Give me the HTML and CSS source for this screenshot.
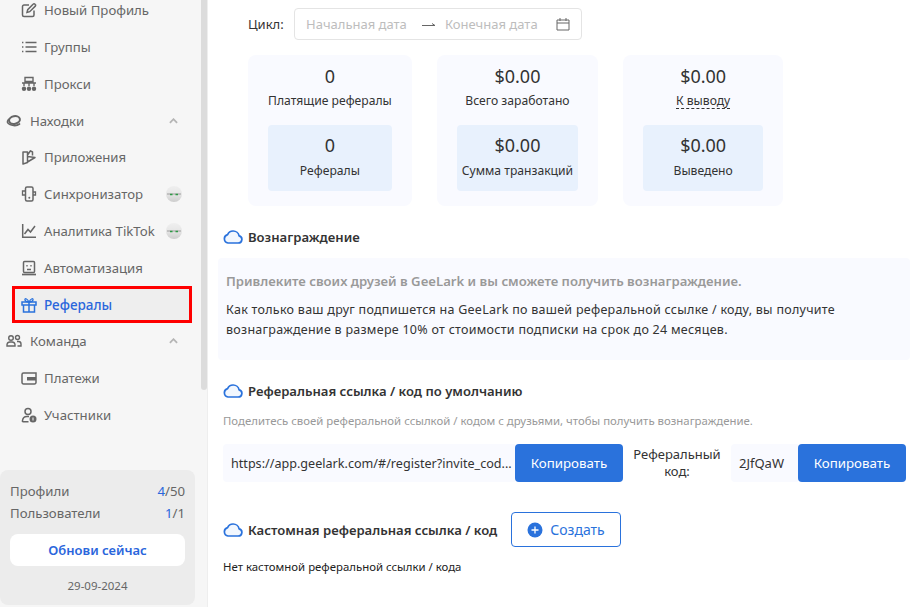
FILE: index.html
```html
<!DOCTYPE html>
<html lang="ru">
<head>
<meta charset="utf-8">
<title>Рефералы</title>
<link rel="stylesheet" href="styles.css">
</head>
<body>
<svg class="defs" aria-hidden="true"><defs>
<linearGradient id="faceFill" x1="0" y1="0" x2="0" y2="1"><stop offset="0" stop-color="#efefef"/><stop offset=".5" stop-color="#e6e6e6"/><stop offset="1" stop-color="#cdcdcd"/></linearGradient>
<symbol id="cloud" viewBox="0 0 20 14"><path d="M5 13h10.200a3.600 3.600 0 0 0 .9-7.100A6 6 0 0 0 10 1a6 6 0 0 0-5.400 3.600A4.300 4.300 0 0 0 5 13z" fill="#f2f7fe" stroke="#2a72dc" stroke-width="1.700" stroke-linejoin="round"/></symbol>
<symbol id="face" viewBox="0 0 16 16"><circle cx="8" cy="8" r="8" fill="url(#faceFill)"/><path d="M1 8h14" stroke="#8a8a8a" stroke-width=".8"/><path d="M4 8.500h2.500M9.500 8.500h2.500" stroke="#2c9a44" stroke-width="1.500"/></symbol>
</defs></svg>
<div class="app">
  <aside class="sidebar">
    <nav class="nav">
      <a class="item sub"><svg class="ico" viewBox="0 0 16 16"><path d="M13 8.500V13a1.500 1.500 0 0 1-1.500 1.500H3A1.500 1.500 0 0 1 1.500 13V4.500A1.500 1.500 0 0 1 3 3h5" fill="none" stroke="#666" stroke-width="1.500"/><path d="M6 10.500l.7-2.800 5.600-5.600a1 1 0 0 1 1.500 0l.5.500a1 1 0 0 1 0 1.500L8.700 9.700z" fill="none" stroke="#666" stroke-width="1.500"/></svg><span>Новый Профиль</span></a>
      <a class="item sub"><svg class="ico" viewBox="0 0 16 16"><path d="M4.500 3.500h11M4.500 8h11M4.500 12.500h11" stroke="#666" stroke-width="1.300"/><path d="M1 3.500h2M1 8h2M1 12.500h2" stroke="#666" stroke-width="1.300" stroke-dasharray="1.200 .6"/></svg><span>Группы</span></a>
      <a class="item sub"><svg class="ico" viewBox="0 0 16 16"><path d="M4 1.500h8v4H4zM1 7h14" fill="none" stroke="#666" stroke-width="1.400"/><path d="M3 7v3M8 5v5M13 7v3" stroke="#666" stroke-width="1.400"/><circle cx="3" cy="12.700" r="2.200" fill="#666"/><circle cx="8" cy="12.700" r="2.200" fill="#666"/><circle cx="13" cy="12.700" r="2.200" fill="#666"/></svg><span>Прокси</span></a>
      <a class="item group"><svg class="ico" viewBox="0 0 16 16"><ellipse cx="8.500" cy="7" rx="5.500" ry="3.800" transform="rotate(-12 8.500 7)" fill="none" stroke="#666" stroke-width="2"/><path d="M2.500 6.500C.5 9 1.500 10.500 4 11.500c3.500 1.500 7.500 1 9.500-.5" fill="none" stroke="#666" stroke-width="1.700" stroke-linecap="round"/></svg><span>Находки</span><svg class="chev" viewBox="0 0 10 6"><path d="M1 5l4-4 4 4" fill="none" stroke="#b5b5b5" stroke-width="2"/></svg></a>
      <a class="item sub"><svg class="ico" viewBox="0 0 16 16"><path d="M2 3h4.500v10.500L2 15zM6.500 6l3-4.200 2 1.200v3.500M6.500 7.500l7.500 1-7.500 4.500" fill="none" stroke="#666" stroke-width="1.500" stroke-linejoin="round"/></svg><span>Приложения</span></a>
      <a class="item sub"><svg class="ico" viewBox="0 0 16 16"><rect x="4.500" y="1" width="7.500" height="14" rx="1.500" fill="none" stroke="#666" stroke-width="1.500"/><path d="M4.500 5H1.500v4h3M12 6h2.500v3H12" fill="none" stroke="#666" stroke-width="1.300"/><circle cx="8.300" cy="11.700" r="1" fill="#666"/></svg><span>Синхронизатор</span><svg class="face"><use href="#face"/></svg></a>
      <a class="item sub"><svg class="ico" viewBox="0 0 16 16"><path d="M1.700 1v13.300H15" fill="none" stroke="#666" stroke-width="1.500"/><path d="M3.500 11l3.500-4.500 2.500 2.500L14 3" fill="none" stroke="#666" stroke-width="1.500"/></svg><span>Аналитика TikTok</span><svg class="face"><use href="#face"/></svg></a>
      <a class="item sub"><svg class="ico" viewBox="0 0 16 16"><rect x="2.500" y="1.500" width="11" height="11" rx="1" fill="none" stroke="#666" stroke-width="1.500"/><path d="M1 14.500h14" stroke="#666" stroke-width="1.700"/><path d="M6 5v1.500M10 5v1.500M6 9.500h4" stroke="#666" stroke-width="1.300"/></svg><span>Автоматизация</span></a>
      <a class="item sub active"><svg class="ico" viewBox="0 0 16 16"><path d="M1 5h14v3H1zM2.500 8v7h11V8M8 5v10" fill="none" stroke="#2a72dc" stroke-width="1.500"/><path d="M8 5C6 1 3.500 1 4 3s2 2 4 2c2 0 3.500 0 4-2s-2-2-4 2z" fill="none" stroke="#2a72dc" stroke-width="1.300"/></svg><span>Рефералы</span></a>
      <a class="item group"><svg class="ico" viewBox="0 0 16 16"><circle cx="5" cy="5" r="2.300" fill="none" stroke="#666" stroke-width="1.400"/><circle cx="11.500" cy="4.500" r="2" fill="none" stroke="#666" stroke-width="1.400"/><path d="M1 13v-1.500A3 3 0 0 1 4 9h2a3 3 0 0 1 3 2.500V13zM11 8.500h1.500a2.500 2.500 0 0 1 2.500 2.500v2h-3.500" fill="none" stroke="#666" stroke-width="1.400"/></svg><span>Команда</span><svg class="chev" viewBox="0 0 10 6"><path d="M1 5l4-4 4 4" fill="none" stroke="#b5b5b5" stroke-width="2"/></svg></a>
      <a class="item sub"><svg class="ico" viewBox="0 0 16 16"><path d="M15 3H2.500A1.500 1.500 0 0 0 1 4.500v8A1.500 1.500 0 0 0 2.500 14h11a1.500 1.500 0 0 0 1.500-1.500V3z" fill="none" stroke="#666" stroke-width="1.500"/><path d="M6 7h9v3.500H6z" fill="#666"/></svg><span>Платежи</span></a>
      <a class="item sub"><svg class="ico" viewBox="0 0 16 16"><circle cx="7" cy="4.500" r="3" fill="none" stroke="#666" stroke-width="1.500"/><path d="M1.500 15v-1.500A4.500 4.500 0 0 1 6 9.500h2M1.500 14.800h6" fill="none" stroke="#666" stroke-width="1.500"/><circle cx="12" cy="12" r="3.500" fill="#666"/><path d="M12 10.500v3" stroke="#f6f6f6" stroke-width="1"/></svg><span>Участники</span></a>
    </nav>
    <div class="plan">
      <div class="plan-row"><span>Профили</span><span class="count"><b>4</b>/50</span></div>
      <div class="plan-row"><span>Пользователи</span><span class="count"><b>1</b>/1</span></div>
      <button class="upgrade">Обнови сейчас</button>
      <div class="date">29-09-2024</div>
    </div>
    <div class="thumb"></div>
  </aside>
  <main class="main">
    <div class="cycle">
      <span class="cycle-label">Цикл:</span>
      <div class="range">
        <span class="ph ph-start">Начальная дата</span>
        <svg class="arrow" viewBox="0 0 14 5"><path d="M0 3.500h13L10 1.500" fill="none" stroke="#666" stroke-width="1"/></svg>
        <span class="ph ph-end">Конечная дата</span>
        <svg class="cal" viewBox="0 0 14 14"><path d="M1 3h12v10H1zM1 6h12M4 1v3M10 1v3" fill="none" stroke="#666" stroke-width="1"/></svg>
      </div>
    </div>
    <div class="cards">
      <section class="card">
        <div class="num">0</div><div class="cap">Платящие рефералы</div>
        <div class="inner"><div class="num">0</div><div class="cap">Рефералы</div></div>
      </section>
      <section class="card">
        <div class="num">$0.00</div><div class="cap">Всего заработано</div>
        <div class="inner"><div class="num">$0.00</div><div class="cap">Сумма транзакций</div></div>
      </section>
      <section class="card">
        <div class="num">$0.00</div><div class="cap"><span class="dashed">К выводу</span></div>
        <div class="inner"><div class="num">$0.00</div><div class="cap">Выведено</div></div>
      </section>
    </div>
    <h2 class="head head-reward"><svg class="cloud"><use href="#cloud"/></svg>Вознаграждение</h2>
    <div class="panel">
      <p class="panel-title">Привлеките своих друзей в GeeLark и вы сможете получить вознаграждение.</p>
      <p class="panel-text">Как только ваш друг подпишется на GeeLark по вашей реферальной ссылке / коду, вы получите вознаграждение в размере 10% от стоимости подписки на срок до 24 месяцев.</p>
    </div>
    <h2 class="head head-link"><svg class="cloud"><use href="#cloud"/></svg>Реферальная ссылка / код по умолчанию</h2>
    <p class="hint">Поделитесь своей реферальной ссылкой / кодом с друзьями, чтобы получить вознаграждение.</p>
    <div class="share">
      <div class="field field-link">https://app.geelark.com/#/register?invite_cod...</div>
      <button class="copy">Копировать</button>
      <div class="code-label">Реферальный код:</div>
      <div class="field field-code">2JfQaW</div>
      <button class="copy">Копировать</button>
    </div>
    <div class="custom">
      <h2 class="head head-custom"><svg class="cloud"><use href="#cloud"/></svg>Кастомная реферальная ссылка / код</h2>
      <button class="create"><svg class="plus" viewBox="0 0 16 16"><circle cx="8" cy="8" r="7.500" fill="#2a72dc"/><path d="M4.500 8h7M8 4.500v7" stroke="#fff" stroke-width="1.300"/></svg>Создать</button>
    </div>
    <p class="empty">Нет кастомной реферальной ссылки / кода</p>
  </main>
</div>
</body>
</html>
```

FILE: styles.css
```css
* { box-sizing: border-box; }
html, body { margin: 0; height: 100%; overflow: hidden; background: #fff; }
body { font-family: "Noto Sans", sans-serif; color: #333; font-size: 13px; }
.defs { width: 0; height: 0; display: block; }
.app { display: flex; height: 607px; }

.sidebar { position: relative; width: 208px; flex: none; background: #f6f6f6; border-right: 1px solid #eee; display: flex; flex-direction: column; justify-content: space-between; padding-bottom: 2px; overflow: hidden; }
.nav { margin-top: -8.200px; padding-right: 17px; display: flex; flex-direction: column; }
.item { height: 36.800px; flex: none; display: flex; align-items: center; font-size: 13.200px; color: #666; }
.item span { flex: 1; }
.sub { padding-left: 21px; }
.group { padding-left: 6px; }
.ico { width: 16px; height: 16px; margin-right: 7px; flex: none; }
.group .ico { margin-right: 8px; }
.chev { width: 9px; height: 6px; margin-right: 12px; }
.face { width: 16px; height: 16px; margin-right: 8px; }
.active { margin-left: 12px; padding-left: 6px; width: 180px; border: 3px solid #f00; background: #eee; color: #2a66dc; font-size: 13.500px; font-weight: 500; }
.plan { width: 195px; height: 135px; background: #ececec; border-radius: 8px; padding: 10px; color: #666; }
.plan-row { display: flex; justify-content: space-between; height: 22px; align-items: center; font-size: 13.200px; }
.count { color: #666; }
.count b { font-weight: 400; color: #2a66dc; }
.upgrade { display: block; width: 100%; height: 32px; margin-top: 10px; border: 0; border-radius: 8px; background: #fff; color: #2a66dc; font: 600 13px "Noto Sans", sans-serif; }
.date { margin-top: 12px; text-align: center; font-size: 11.500px; color: #666; }
.thumb { position: absolute; left: 201px; top: 0; width: 6px; height: 390px; background: #dcdcdc; border-radius: 0 0 3px 3px; }

.main { flex: 1; min-width: 0; padding: 8px 0 0 10px; }
.cycle { display: flex; align-items: center; margin-left: 30px; }
.cycle-label { width: 46px; font-size: 13px; }
.range { width: 288px; height: 32px; border: 1px solid #e4e4e4; border-radius: 4px; display: flex; align-items: center; padding: 0 11px; color: #bdbdbd; font-size: 13px; }
.ph-start { width: 116px; }
.arrow { width: 14px; height: 5px; margin-right: 9px; }
.ph-end { flex: 1; }
.cal { width: 14px; height: 14px; }

.cards { display: flex; gap: 25px; margin: 15px 0 0 30px; }
.card { background: #f9faff; border-radius: 8px; padding: 9px 20px 15px; text-align: center; height: 151px; min-width: 160px; }
.num { font-size: 18px; line-height: 24px; color: #333; }
.cap { margin-top: 1px; font-size: 12.150px; line-height: 24px; color: #333; }
.dashed { display: inline-block; line-height: 15px; border-bottom: 1px dashed #333; }
.inner { background: #e8f1fd; border-radius: 4px; margin-top: 12px; height: 66px; padding: 8px 5px 0; min-width: 120px; }
.inner .cap { margin-top: 2px; }

.head { display: flex; align-items: center; margin: 0 0 0 5px; font-size: 13.100px; line-height: 20px; font-weight: 600; color: #333; }
.cloud { width: 20px; height: 14px; margin-right: 5px; flex: none; }
.head-reward { margin-top: 21px; }
.panel { margin-top: 11px; height: 102px; background: #f9faff; padding: 13px 8px 0; border-radius: 4px; }
.panel p { margin: 0; }
.panel-title { font-weight: 600; font-size: 13.120px; line-height: 20px; color: #999; }
.panel .panel-text { margin-top: 9px; font-size: 12.500px; line-height: 20px; color: #333; letter-spacing: .27px; }
.head-link { margin-top: 21px; }
.hint { margin: 12px 0 0 5px; font-size: 11.400px; line-height: 16px; color: #999; }
.share { display: flex; align-items: center; margin: 15px 0 0 5px; height: 38px; }
.field { height: 38px; background: #f9faff; display: flex; align-items: center; padding-left: 8px; font-size: 12.600px; white-space: nowrap; border-radius: 4px 0 0 4px; }
.field-link { width: 292px; }
.field-code { width: 67px; font-size: 13px; }
.copy { width: 108px; height: 38px; border: 0; border-radius: 4px; background: #2a72dc; color: #fff; font: 13.300px "Noto Sans", sans-serif; }
.code-label { width: 108px; padding: 0 10px; text-align: center; font-size: 13px; line-height: 17px; }
.custom { display: flex; align-items: center; margin-top: 30px; }
.head-custom { width: 288px; }
.create { display: flex; align-items: center; justify-content: center; gap: 7px; width: 110px; height: 35px; background: #fff; border: 1px solid #2a72dc; border-radius: 4px; color: #2a72dc; font: 14px "Noto Sans", sans-serif; }
.plus { width: 16px; height: 16px; }
.empty { margin: 12px 0 0 5px; font-size: 11.400px; line-height: 16px; color: #222; }
```
